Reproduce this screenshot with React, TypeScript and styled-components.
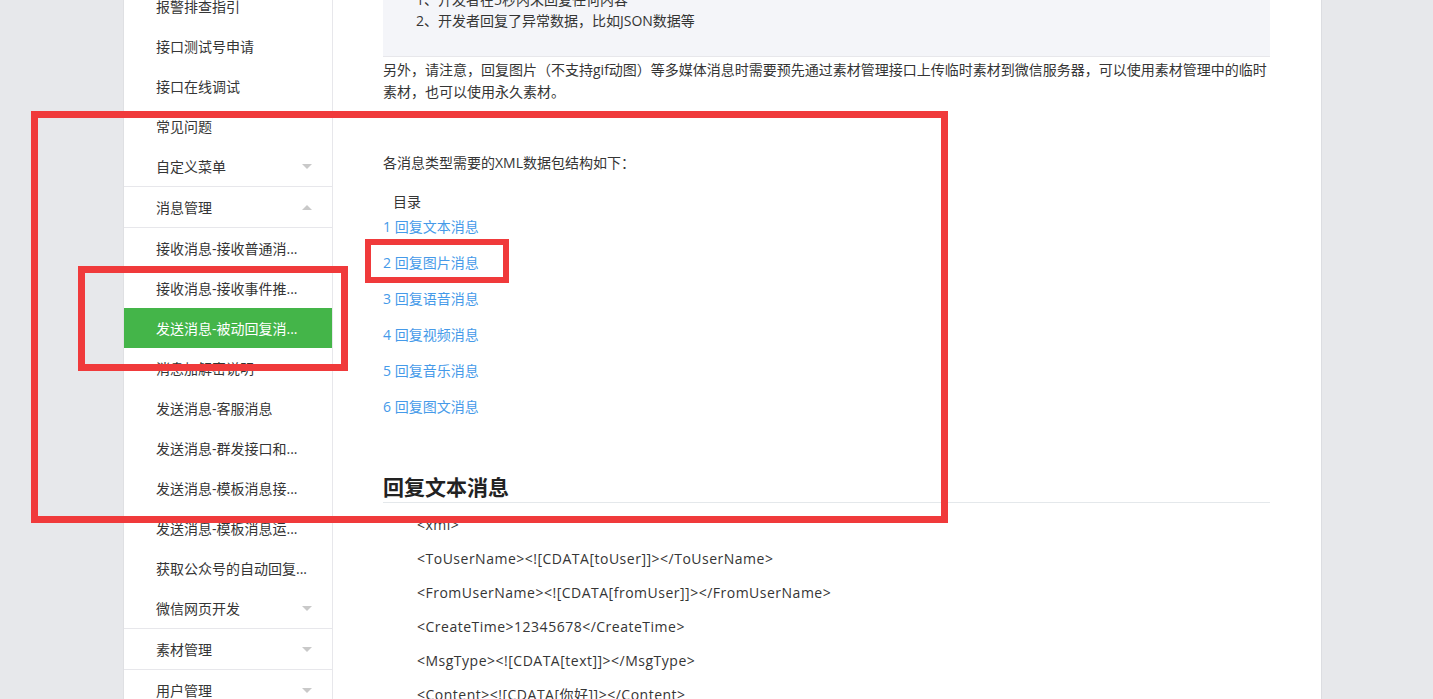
import React from 'react';
import styled, { createGlobalStyle } from 'styled-components';

const GlobalStyle = createGlobalStyle`
  html, body {
    margin: 0;
    padding: 0;
    height: 100%;
    overflow: hidden;
  }
  body {
    background: #e7e8eb;
    font-family: "Open Sans", "Noto Sans CJK SC", sans-serif;
    color: #353535;
    font-size: 14px;
  }
`;

const Page = styled.div`
  position: relative;
  display: flex;
  height: 699px;
  overflow: hidden;
  padding-left: 123px;
`;

const Frame = styled.div`
  display: flex;
  width: 1199px;
  height: 100%;
  background: #fff;
  border-right: 1px solid #dcdde1;
  box-sizing: border-box;
`;

const Sidebar = styled.nav`
  width: 210px;
  flex-shrink: 0;
  border-left: 1px solid #dfe0e3;
  border-right: 1px solid #e7e7eb;
  box-sizing: border-box;
  overflow: hidden;
`;

const MenuList = styled.ul`
  list-style: none;
  margin: -14px 0 0;
  padding: 0;
`;

const MenuRow = styled.li<{ $active?: boolean; $header?: boolean }>`
  display: flex;
  align-items: center;
  justify-content: space-between;
  height: 40px;
  padding: 0 20px 0 32px;
  white-space: nowrap;
  font-size: 14px;
  color: ${(p) => (p.$active ? '#fff' : '#353535')};
  background: ${(p) => (p.$active ? '#44b549' : 'transparent')};
  border-bottom: ${(p) => (p.$header ? '1px solid #e7e7eb' : 'none')};
`;

const Caret = styled.span<{ $up?: boolean }>`
  width: 0;
  height: 0;
  border-left: 5px solid transparent;
  border-right: 5px solid transparent;
  ${(p) =>
    p.$up
      ? 'border-bottom: 5px solid #c9c9c9;'
      : 'border-top: 5px solid #c9c9c9;'}
`;

const Content = styled.main`
  flex: 1;
  padding: 0 51px 0 50px;
  overflow: hidden;
`;

const Quote = styled.div`
  margin-top: -26px;
  padding: 15px 33px 25px;
  background: #f4f5f9;
  border-bottom: 1px solid #e7e7eb;
  line-height: 21px;
`;

const Para = styled.p<{ $gap?: number }>`
  margin: ${(p) => p.$gap ?? 0}px 0 0;
  line-height: 22px;
`;

const TocTitle = styled.div`
  margin: 20px 0 0 10px;
  line-height: 16px;
`;

const TocList = styled.ul`
  list-style: none;
  margin: -1px 0 0;
  padding: 0;
`;

const TocLink = styled.li`
  line-height: 36px;
  color: #459ae9;
`;

const Heading = styled.h2`
  margin: 47px 0 0;
  font-size: 21px;
  font-weight: 700;
  line-height: 30px;
  color: #222;
  border-bottom: 1px solid #e4e8eb;
`;

const Code = styled.div`
  padding-left: 34px;
  margin-top: 5px;
`;

const CodeLine = styled.div`
  line-height: 34px;
  letter-spacing: 0.5px;
  white-space: nowrap;
`;

const Mark = styled.div<{ $x: number; $y: number; $w: number; $h: number; $b: number }>`
  position: absolute;
  left: ${(p) => p.$x}px;
  top: ${(p) => p.$y}px;
  width: ${(p) => p.$w}px;
  height: ${(p) => p.$h}px;
  border: ${(p) => p.$b}px solid #f03a3b;
  box-sizing: border-box;
  pointer-events: none;
`;

type Item = { label: string; header?: 'down' | 'up'; active?: boolean };

const menu: Item[] = [
  { label: '报警排查指引' },
  { label: '接口测试号申请' },
  { label: '接口在线调试' },
  { label: '常见问题' },
  { label: '自定义菜单', header: 'down' },
  { label: '消息管理', header: 'up' },
  { label: '接收消息-接收普通消...' },
  { label: '接收消息-接收事件推...' },
  { label: '发送消息-被动回复消...', active: true },
  { label: '消息加解密说明' },
  { label: '发送消息-客服消息' },
  { label: '发送消息-群发接口和...' },
  { label: '发送消息-模板消息接...' },
  { label: '发送消息-模板消息运...' },
  { label: '获取公众号的自动回复...' },
  { label: '微信网页开发', header: 'down' },
  { label: '素材管理', header: 'down' },
  { label: '用户管理', header: 'down' },
];

const toc = [
  '1 回复文本消息',
  '2 回复图片消息',
  '3 回复语音消息',
  '4 回复视频消息',
  '5 回复音乐消息',
  '6 回复图文消息',
];

const xml = [
  '<xml>',
  '<ToUserName><![CDATA[toUser]]></ToUserName>',
  '<FromUserName><![CDATA[fromUser]]></FromUserName>',
  '<CreateTime>12345678</CreateTime>',
  '<MsgType><![CDATA[text]]></MsgType>',
  '<Content><![CDATA[你好]]></Content>',
];

export default function App() {
  return (
    <>
      <GlobalStyle />
      <Page>
        <Frame>
          <Sidebar>
            <MenuList>
              {menu.map((m) => (
                <MenuRow key={m.label} $active={m.active} $header={!!m.header}>
                  <span>{m.label}</span>
                  {m.header && <Caret $up={m.header === 'up'} />}
                </MenuRow>
              ))}
            </MenuList>
          </Sidebar>
          <Content>
            <Quote>
              <div>1、开发者在5秒内未回复任何内容</div>
              <div>2、开发者回复了异常数据，比如JSON数据等</div>
            </Quote>
            <Para $gap={2}>
              另外，请注意，回复图片（不支持gif动图）等多媒体消息时需要预先通过素材管理接口上传临时素材到微信服务器，可以使用素材管理中的临时素材，也可以使用永久素材。
            </Para>
            <Para $gap={49}>各消息类型需要的XML数据包结构如下：</Para>
            <TocTitle>目录</TocTitle>
            <TocList>
              {toc.map((t) => (
                <TocLink key={t}>{t}</TocLink>
              ))}
            </TocList>
            <Heading>回复文本消息</Heading>
            <Code>
              {xml.map((l) => (
                <CodeLine key={l}>{l}</CodeLine>
              ))}
            </Code>
          </Content>
        </Frame>
        <Mark $x={31} $y={111} $w={917} $h={412} $b={7} />
        <Mark $x={78} $y={266} $w={270} $h={105} $b={7} />
        <Mark $x={365} $y={239} $w={144} $h={44} $b={6} />
      </Page>
    </>
  );
}
